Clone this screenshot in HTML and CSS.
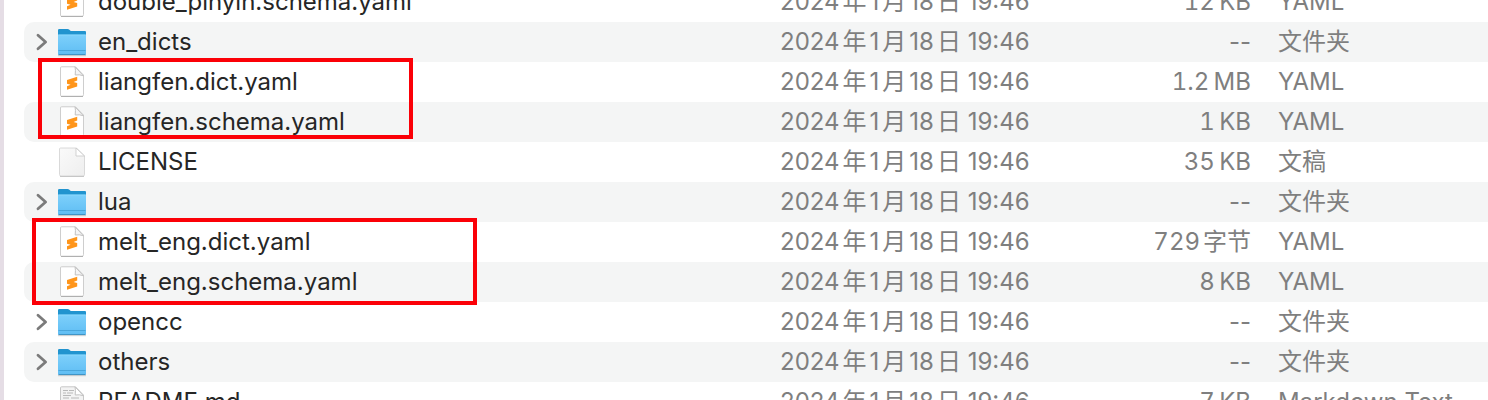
FILE: index.html
```
<!DOCTYPE html>
<html lang="zh-CN">
<head>
    <meta charset="UTF-8">
    <meta name="viewport" content="width=device-width, initial-scale=1.0">
    <title>Rime</title>
    <link rel="stylesheet" href="styles.css">
</head>
<body>
    <svg class="defs" aria-hidden="true">
        <defs>
            <linearGradient id="folderFill" x1="0" y1="0" x2="0" y2="1">
                <stop offset="0" stop-color="#7dd0fb"/>
                <stop offset="1" stop-color="#5fbdf3"/>
            </linearGradient>
            <linearGradient id="paperFill" x1="0" y1="0" x2="1" y2="1">
                <stop offset="0" stop-color="#fafafa"/>
                <stop offset="1" stop-color="#eeeeee"/>
            </linearGradient>
        </defs>
        <symbol id="chevron" viewBox="0 0 12 18">
            <path d="M2 2.2 L9.6 9 L2 15.8" fill="none" stroke="#7b7b7b" stroke-width="2.8" stroke-linecap="round" stroke-linejoin="round"/>
        </symbol>
        <symbol id="folder" viewBox="0 0 30 32">
            <path d="M1 4.2 Q1 3 2.2 3 H10.5 Q11.6 3 12.4 3.8 L13.2 4.5 Q13.7 5 14.6 5 H28 Q29 5 29 6.2 V15 H1 Z" fill="#2194cf"/>
            <path d="M1 9.6 Q1 8.6 2 8.6 H28 Q29 8.6 29 9.6 V27.5 Q29 29 27.5 29 H2.5 Q1 29 1 27.5 Z" fill="url(#folderFill)"/>
            <path d="M1 9.1 H29" stroke="#8ddafd" stroke-width="0.8"/>
            <path d="M1.5 24.5 H28.5" stroke="#439fd4" stroke-width="0.8"/>
            <path d="M1.5 28.6 H28.5" stroke="#3e91c2" stroke-width="1"/>
            <path d="M1 29.7 H29" stroke="#000" stroke-opacity="0.22" stroke-width="0.8"/>
        </symbol>
        <symbol id="sublime" viewBox="0 0 30 32">
            <path d="M4.5 0.8 H18.5 L26.5 9 V28.5 Q26.5 30.2 25.2 30.2 H4.5 Q3.5 30.2 3.5 29.2 V1.8 Q3.5 0.8 4.5 0.8 Z" fill="#fff" stroke="#c8c8c8" stroke-width="0.9"/>
            <path d="M4 30.5 H26" stroke="#aaa" stroke-width="0.9"/>
            <path d="M18 0.8 Q18.8 4 18.2 9 Q22.5 8.2 26.5 9.8 Z" fill="#f5f5f5" stroke="#c2c2c2" stroke-width="1"/>
            <path d="M10 14 L20.2 10.8 V14.6 L16.6 16 L20.2 17 V20.6 L10 23.8 V20.2 L13.6 18.8 L10 17.8 Z" fill="#ff951a"/>
        </symbol>
        <symbol id="paper" viewBox="0 0 30 32">
            <path d="M3.5 2 H19.5 L27.5 10 V28.5 Q27.5 30 26 30 H4 Q2.5 30 2.5 28.5 V3 Q2.5 2 3.5 2 Z" fill="url(#paperFill)" stroke="#d0d0d0" stroke-width="0.8"/>
            <path d="M3 30.5 H27" stroke="#bdbdbd" stroke-width="0.8"/>
            <path d="M19 2 V10 H27.5 Z" fill="#fff" stroke="#c8c8c8" stroke-width="0.8"/>
        </symbol>
        <symbol id="text" viewBox="0 0 30 32">
            <path d="M4.5 0.8 H18.5 L26.5 9 V31 H3.5 V1.8 Q3.5 0.8 4.5 0.8 Z" fill="#f3f3f3" stroke="#c8c8c8" stroke-width="1"/>
            <path d="M6 4.5 H11 M12 4.5 H17 M6 7 H9 M10 7 H16 M6 9.5 H14 M6 12 H12 M14 12 H22 M6 14.5 H20" stroke="#b9b9b9" stroke-width="1"/>
            <path d="M18 0.8 Q18.8 4 18.2 9 Q22.5 8.2 26.5 9.8 Z" fill="#fff" stroke="#c2c2c2" stroke-width="1"/>
        </symbol>
    </svg>

    <div id="main-wrap">
        <table id="fileList">
            <colgroup>
                <col>
                <col class="col-date">
                <col class="col-size">
                <col class="col-kind">
            </colgroup>
            <tbody>
                <tr>
                    <td><div class="name"><svg class="icon"><use href="#sublime"/></svg><span>double_pinyin.schema.yaml</span></div></td>
                    <td>2024年1月18日 19:46</td>
                    <td class="size num">12&thinsp;KB</td>
                    <td>YAML</td>
                </tr>
                <tr>
                    <td><div class="name"><button class="toggle" aria-label="en_dicts"><svg><use href="#chevron"/></svg></button><svg class="icon"><use href="#folder"/></svg><span>en_dicts</span></div></td>
                    <td>2024年1月18日 19:46</td>
                    <td class="size">--</td>
                    <td>文件夹</td>
                </tr>
                <tr>
                    <td><div class="name"><svg class="icon"><use href="#sublime"/></svg><span>liangfen.dict.yaml</span></div></td>
                    <td>2024年1月18日 19:46</td>
                    <td class="size num">1.2&thinsp;MB</td>
                    <td>YAML</td>
                </tr>
                <tr>
                    <td><div class="name"><svg class="icon"><use href="#sublime"/></svg><span>liangfen.schema.yaml</span></div></td>
                    <td>2024年1月18日 19:46</td>
                    <td class="size num">1&thinsp;KB</td>
                    <td>YAML</td>
                </tr>
                <tr>
                    <td><div class="name"><svg class="icon"><use href="#paper"/></svg><span>LICENSE</span></div></td>
                    <td>2024年1月18日 19:46</td>
                    <td class="size num">35&thinsp;KB</td>
                    <td>文稿</td>
                </tr>
                <tr>
                    <td><div class="name"><button class="toggle" aria-label="lua"><svg><use href="#chevron"/></svg></button><svg class="icon"><use href="#folder"/></svg><span>lua</span></div></td>
                    <td>2024年1月18日 19:46</td>
                    <td class="size">--</td>
                    <td>文件夹</td>
                </tr>
                <tr>
                    <td><div class="name"><svg class="icon"><use href="#sublime"/></svg><span>melt_eng.dict.yaml</span></div></td>
                    <td>2024年1月18日 19:46</td>
                    <td class="size num">729字节</td>
                    <td>YAML</td>
                </tr>
                <tr>
                    <td><div class="name"><svg class="icon"><use href="#sublime"/></svg><span>melt_eng.schema.yaml</span></div></td>
                    <td>2024年1月18日 19:46</td>
                    <td class="size num">8&thinsp;KB</td>
                    <td>YAML</td>
                </tr>
                <tr>
                    <td><div class="name"><button class="toggle" aria-label="opencc"><svg><use href="#chevron"/></svg></button><svg class="icon"><use href="#folder"/></svg><span>opencc</span></div></td>
                    <td>2024年1月18日 19:46</td>
                    <td class="size">--</td>
                    <td>文件夹</td>
                </tr>
                <tr>
                    <td><div class="name"><button class="toggle" aria-label="others"><svg><use href="#chevron"/></svg></button><svg class="icon"><use href="#folder"/></svg><span>others</span></div></td>
                    <td>2024年1月18日 19:46</td>
                    <td class="size">--</td>
                    <td>文件夹</td>
                </tr>
                <tr>
                    <td><div class="name"><svg class="icon"><use href="#text"/></svg><span>README.md</span></div></td>
                    <td>2024年1月18日 19:46</td>
                    <td class="size num">7&thinsp;KB</td>
                    <td>Markdown Text</td>
                </tr>
            </tbody>
        </table>
        <div class="mark mark-liangfen"></div>
        <div class="mark mark-melt"></div>
    </div>
</body>
</html>
```
FILE: styles.css
```
* {box-sizing: border-box;}
body {
    margin: 0;
    height: 100vh;
    overflow: hidden;
    background-color: #fff;
    font-family: Inter, "Noto Sans CJK SC", sans-serif;
    font-size: 24px;
    line-height: 40px;
    color: #7f7f7f;
    text-autospace: normal;
}
.defs {position: absolute;width: 0;height: 0;}

#main-wrap {
    position: relative;
    height: 100%;
    padding-left: 20px;
    overflow: hidden;
    border-left: 4px solid #e5dde5;
}

/* the list is scrolled a little, first row is cut */
#fileList {
    width: 100%;
    margin-top: -18px;
    table-layout: fixed;
    border-collapse: collapse;
}
#fileList td {
    height: 40px;
    padding: 0;
    white-space: nowrap;
}
#fileList tr:nth-child(even) td {background-color: #f4f5f5;}
#fileList td:first-child {border-radius: 10px 0 0 10px;}
#fileList .size {padding-right: 27px;text-align: right;}
.num {font-variant-numeric: tabular-nums;}
.col-date {width: 280px;}
.col-size {width: 218px;}
.col-kind {width: 210px;}

.name {
    display: flex;
    align-items: center;
    height: 40px;
    padding-left: 33px;
    color: #262626;
}
.icon {
    width: 30px;
    height: 32px;
    margin-right: 11px;
}
.toggle {
    display: flex;
    width: 12px;
    height: 18px;
    margin-left: -21px;
    margin-right: 9px;
    padding: 0;
    border: 0;
    background: none;
}
.toggle svg {width: 12px;height: 18px;}

.mark {
    position: absolute;
    border: 4px solid #fb0007;
}
.mark-liangfen {top: 58px;left: 34px;width: 375px;height: 81px;}
.mark-melt {top: 218px;left: 28px;width: 445px;height: 87px;}
```
